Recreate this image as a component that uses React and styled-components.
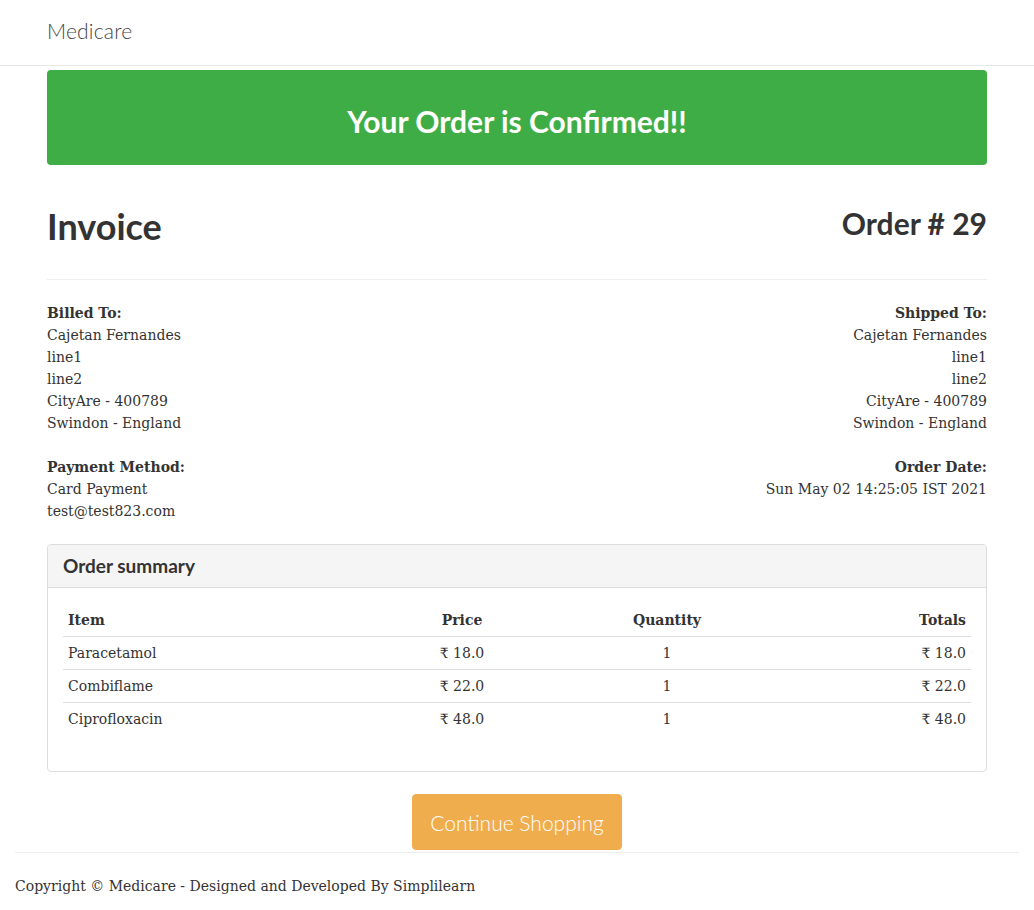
import React from "react";
import styled, { createGlobalStyle } from "styled-components";

const billed = ["Cajetan Fernandes", "line1", "line2", "CityAre - 400789", "Swindon - England"];

const items = [
  { name: "Paracetamol", price: "18.0", qty: 1, total: "18.0" },
  { name: "Combiflame", price: "22.0", qty: 1, total: "22.0" },
  { name: "Ciprofloxacin", price: "48.0", qty: 1, total: "48.0" },
];

export default function App() {
  return (
    <>
      <GlobalStyle />
      <Navbar>
        <Container>
          <Brand>Medicare</Brand>
        </Container>
      </Navbar>
      <Container>
        <Banner>Your Order is Confirmed!!</Banner>
        <TitleRow>
          <Invoice>Invoice</Invoice>
          <OrderNo>Order # 29</OrderNo>
        </TitleRow>
        <Rule />
        <InfoRow>
          <Address>
            <strong>Billed To:</strong>
            {billed.map(l => (
              <span key={l}>{l}</span>
            ))}
          </Address>
          <Address $right>
            <strong>Shipped To:</strong>
            {billed.map(l => (
              <span key={l}>{l}</span>
            ))}
          </Address>
        </InfoRow>
        <InfoRow>
          <Address>
            <strong>Payment Method:</strong>
            <span>Card Payment</span>
            <span>test@test823.com</span>
          </Address>
          <Address $right>
            <strong>Order Date:</strong>
            <span>Sun May 02 14:25:05 IST 2021</span>
          </Address>
        </InfoRow>
        <Panel>
          <PanelHeading>Order summary</PanelHeading>
          <PanelBody>
            <Table>
              <colgroup>
                <col style={{ width: 340 }} />
                <col style={{ width: 118 }} />
                <col style={{ width: 292 }} />
                <col />
              </colgroup>
              <thead>
                <tr>
                  <Th>Item</Th>
                  <Th $align="center">Price</Th>
                  <Th $align="center">Quantity</Th>
                  <Th $align="right">Totals</Th>
                </tr>
              </thead>
              <tbody>
                {items.map(it => (
                  <tr key={it.name}>
                    <Td>{it.name}</Td>
                    <Td $align="center">₹ {it.price}</Td>
                    <Td $align="center">{it.qty}</Td>
                    <Td $align="right">₹ {it.total}</Td>
                  </tr>
                ))}
              </tbody>
            </Table>
          </PanelBody>
        </Panel>
        <Actions>
          <ContinueButton>Continue Shopping</ContinueButton>
        </Actions>
      </Container>
      <Footer>
        <p>Copyright © Medicare - Designed and Developed By Simplilearn</p>
      </Footer>
    </>
  );
}

const GlobalStyle = createGlobalStyle`
  * { box-sizing: border-box; }
  body {
    margin: 0;
    background: #fff;
    color: #333;
    font-family: "DejaVu Serif", "Liberation Serif", serif;
    font-size: 14px;
    line-height: 22px;
  }
`;

const heading = `
  font-family: Lato, "Noto Sans", sans-serif;
  color: #333;
  margin: 0;
`;

const Container = styled.div`
  width: 970px;
  margin: 0 auto;
  padding: 0 15px;
`;

const Navbar = styled.nav`
  height: 66px;
  border-bottom: 1px solid #e7e7e7;
  display: flex;
  align-items: center;
  margin-bottom: 4px;
`;

const Brand = styled.a`
  font-family: Lato, "Noto Sans", sans-serif;
  font-weight: 300;
  font-size: 21px;
  color: #444;
  letter-spacing: 0.2px;
`;

const Banner = styled.h2`
  ${heading}
  background: #3fad46;
  color: #fff;
  border-radius: 4px;
  height: 95px;
  padding-top: 6px;
  display: flex;
  align-items: center;
  justify-content: center;
  font-size: 30px;
  font-weight: 700;
`;

const TitleRow = styled.div`
  display: flex;
  justify-content: space-between;
  align-items: flex-start;
  padding-top: 41px;
`;

const Invoice = styled.h1`
  ${heading}
  font-size: 36px;
  font-weight: 700;
  line-height: 40px;
`;

const OrderNo = styled.h3`
  ${heading}
  font-size: 30px;
  font-weight: 700;
  line-height: 34px;
`;

const Rule = styled.hr`
  border: 0;
  border-top: 1px solid #eee;
  margin: 33px 0 22px;
`;

const InfoRow = styled.div`
  display: flex;
  justify-content: space-between;
  margin-bottom: 22px;
`;

const Address = styled.address`
  font-style: normal;
  display: flex;
  flex-direction: column;
  text-align: ${p => (p.$right ? "right" : "left")};
  strong { font-weight: 700; }
`;

const Panel = styled.section`
  border: 1px solid #ddd;
  border-radius: 4px;
  margin-top: 12px;
  margin-bottom: 22px;
`;

const PanelHeading = styled.h3`
  ${heading}
  background: #f5f5f5;
  border-bottom: 1px solid #ddd;
  border-radius: 3px 3px 0 0;
  padding: 0 15px;
  height: 43px;
  display: flex;
  align-items: center;
  font-size: 19px;
  font-weight: 700;
`;

const PanelBody = styled.div`
  padding: 15px 15px 16px;
`;

const Table = styled.table`
  width: 100%;
  border-collapse: collapse;
  table-layout: fixed;
  margin-bottom: 20px;
`;

const Th = styled.th`
  text-align: ${p => p.$align || "left"};
  padding: 6px 5px 5px;
  border-bottom: 1px solid #ddd;
  font-weight: 700;
`;

const Td = styled.td`
  text-align: ${p => p.$align || "left"};
  padding: 5px;
  border-bottom: 1px solid #ddd;
  tr:last-child > & { border-bottom: 0; }
`;

const Actions = styled.div`
  display: flex;
  justify-content: center;
`;

const ContinueButton = styled.button`
  background: #f0ad4e;
  border: 1px solid #f0ad4e;
  border-radius: 4px;
  color: #fff;
  font-family: Lato, "Noto Sans", sans-serif;
  font-weight: 300;
  font-size: 21px;
  height: 56px;
  padding: 0 17px;
`;

const Footer = styled.footer`
  margin: 2px 15px 0;
  border-top: 1px solid #eee;
  p {
    margin: 22px 0 0;
  }
`;
